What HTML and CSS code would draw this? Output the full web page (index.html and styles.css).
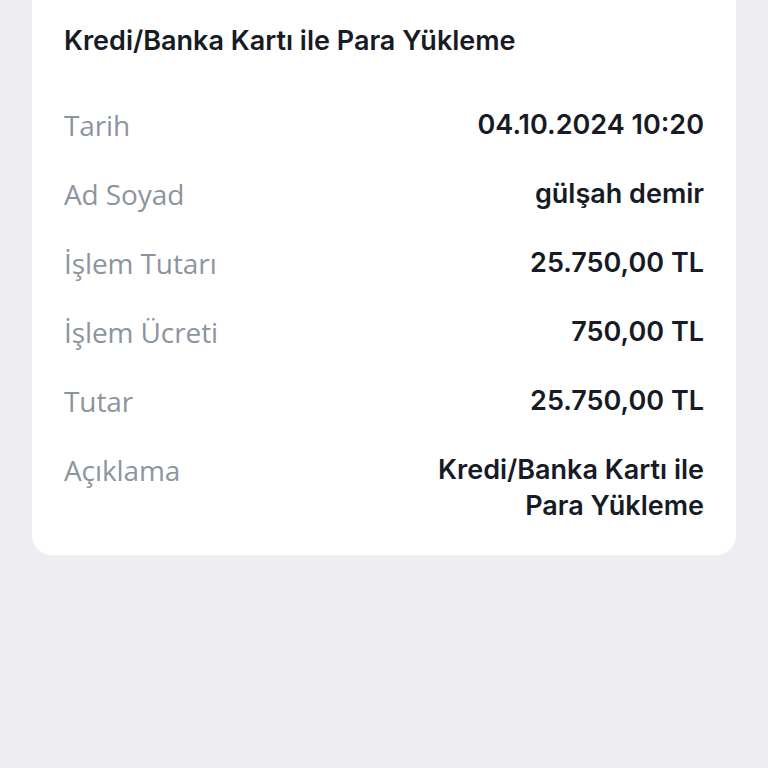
FILE: index.html
```html
<!DOCTYPE html>
<html lang="tr">
<head>
    <meta charset="UTF-8">
    <meta name="viewport" content="width=device-width, initial-scale=1.0">
    <title>İşlem Detayı</title>
    <link rel="stylesheet" href="styles.css">
</head>
<body>
    <div class="page">
        <div class="detail-card">
            <h1 class="card-title">Kredi/Banka Kartı ile Para Yükleme</h1>

            <div class="detail-list">
                <div class="detail-row">
                    <span class="detail-label">Tarih</span>
                    <span class="detail-value">04.10.2024 10:20</span>
                </div>
                <div class="detail-row">
                    <span class="detail-label">Ad Soyad</span>
                    <span class="detail-value">gülşah demir</span>
                </div>
                <div class="detail-row">
                    <span class="detail-label">İşlem Tutarı</span>
                    <span class="detail-value">25.750,00 TL</span>
                </div>
                <div class="detail-row">
                    <span class="detail-label">İşlem Ücreti</span>
                    <span class="detail-value">750,00 TL</span>
                </div>
                <div class="detail-row">
                    <span class="detail-label">Tutar</span>
                    <span class="detail-value">25.750,00 TL</span>
                </div>
                <div class="detail-row">
                    <span class="detail-label">Açıklama</span>
                    <span class="detail-value desc">Kredi/Banka Kartı ile<br>Para Yükleme</span>
                </div>
            </div>
        </div>
    </div>
</body>
</html>
```

FILE: styles.css
```css
* {
    margin: 0;
    padding: 0;
    box-sizing: border-box;
}

body {
    background: #eeeef2;
    font-family: Inter, 'Open Sans', sans-serif;
    color: #161b26;
    height: 100vh;
    overflow: hidden;
}

.page {
    padding: 0 32px;
}

.detail-card {
    background: #ffffff;
    border-radius: 0 0 20px 20px;
    padding: 23px 32px 31px;
}

.card-title {
    font-size: 27px;
    font-weight: 600;
    line-height: 36px;
    color: #161b26;
}

.detail-list {
    display: flex;
    flex-direction: column;
    gap: 33px;
    margin-top: 48px;
}

.detail-row {
    display: flex;
    justify-content: space-between;
    align-items: flex-start;
    font-size: 27px;
    line-height: 36px;
}

.detail-label {
    font-family: 'Open Sans', sans-serif;
    font-size: 28px;
    color: #8c94a1;
    font-weight: 400;
    letter-spacing: -0.1px;
}

.detail-value {
    font-weight: 600;
    color: #161b26;
    text-align: right;
}
```
